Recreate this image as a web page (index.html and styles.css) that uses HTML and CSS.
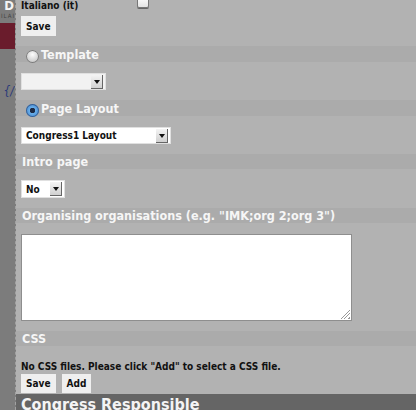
FILE: index.html
```html
<!DOCTYPE html>
<html>
<head>
<meta charset="utf-8">
<link rel="stylesheet" href="styles.css">
</head>
<body>
<div class="page">
  <aside class="side">
    <div class="side-logo">D</div>
    <div class="side-sub">ILAI</div>
    <div class="side-bar"></div>
    <div class="side-code">} {/</div>
  </aside>
  <main class="main">
    <div class="row lang-row">
      <span class="label">Italiano (it)</span>
      <span class="checkbox"></span>
    </div>
    <div class="row btn-row">
      <button class="btn">Save</button>
    </div>

    <div class="band"><span class="radio"></span><span class="band-title">Template</span></div>
    <div class="row field-row">
      <div class="select sel-template"><span class="sel-text"></span><span class="sel-arrow"></span></div>
    </div>

    <div class="band"><span class="radio radio-on"></span><span class="band-title">Page Layout</span></div>
    <div class="row field-row">
      <div class="select sel-layout"><span class="sel-text">Congress1 Layout</span><span class="sel-arrow"></span></div>
    </div>

    <div class="band band-plain"><span class="band-title">Intro page</span></div>
    <div class="row field-row">
      <div class="select sel-intro"><span class="sel-text">No</span><span class="sel-arrow"></span></div>
    </div>

    <div class="band band-plain"><span class="band-title">Organising organisations (e.g. "IMK;org 2;org 3")</span></div>
    <div class="row field-row">
      <div class="textarea"><span class="grip"></span></div>
    </div>

    <div class="band band-plain band-css"><span class="band-title">CSS</span></div>
    <div class="row note-row">
      <span class="label">No CSS files. Please click "Add" to select a CSS file.</span>
    </div>
    <div class="row btns-row">
      <button class="btn">Save</button>
      <button class="btn">Add</button>
    </div>
    <div class="dark-band"><span class="dark-title">Congress Responsible</span></div>
  </main>
</div>
</body>
</html>
```
FILE: styles.css
```css
html, body {
  margin: 0;
  padding: 0;
  height: 100%;
  overflow: hidden;
}
body {
  background: #b2b2b2;
  font-family: "DejaVu Sans Condensed", "DejaVu Sans", sans-serif;
}
.page {
  display: flex;
  height: 410px;
}
.side {
  width: 15px;
  flex: none;
  background: #7c7c7c;
  border-right: 1px dashed #a2a2a2;
  overflow: hidden;
  display: flex;
  flex-direction: column;
  align-items: flex-end;
}
.side-logo {
  color: #f4f4f4;
  font-weight: bold;
  font-size: 13px;
  line-height: 13px;
  margin-top: -1px;
  padding-right: 1px;
}
.side-sub {
  color: #444;
  font-size: 6px;
  line-height: 8px;
  letter-spacing: 1px;
  white-space: nowrap;
}
.side-bar {
  align-self: stretch;
  height: 26px;
  margin-top: 3px;
  background: #6a1c2c;
}
.side-code {
  margin-top: 34px;
  color: #2a3a7a;
  font-size: 12px;
  line-height: 16px;
  white-space: nowrap;
  font-style: italic;
  align-self: flex-end;
  padding-right: 1px;
}
.main {
  flex: 1;
  display: flex;
  flex-direction: column;
}
.row {
  display: flex;
  align-items: center;
  padding-left: 5px;
}
.label {
  font-weight: bold;
  font-size: 10px;
  color: #111;
}
.lang-row {
  height: 13px;
}
.checkbox {
  width: 10px;
  height: 10px;
  margin-left: 59px;
  margin-top: -7px;
  background: linear-gradient(#fff, #e4e4e4);
  border: 1px solid #777;
  border-radius: 2px;
  box-shadow: 0 1px 0 #666;
}
.btn-row {
  margin-top: 5px;
  height: 20px;
}
.btn {
  font-family: inherit;
  font-weight: bold;
  font-size: 10px;
  color: #111;
  background: #efefef;
  border: none;
  border-radius: 0;
  height: 20px;
  padding: 0 5px;
  margin: 0;
}
.band {
  margin-top: 10px;
  height: 16px;
  background: #ababab;
  display: flex;
  align-items: center;
  padding-left: 10px;
}
.band-plain {
  padding-left: 6px;
}
.band-css {
  height: 15px;
}
.band-title {
  color: #f6f6f6;
  font-weight: bold;
  font-size: 12.5px;
  white-space: nowrap;
}
.radio {
  width: 13px;
  height: 13px;
  flex: none;
  border-radius: 50%;
  margin-top: 4px;
  margin-right: 2px;
  background: radial-gradient(circle at 50% 35%, #fdfdfd, #d2d2d2 60%, #9a9a9a);
  box-shadow: inset 0 0 0 1px #7a7a7a;
}
.radio-on {
  background: radial-gradient(circle, #1d2a44 0 2.5px, #6aaee9 3px, #2f78c9 100%);
  box-shadow: inset 0 0 0 1px #3a5f91;
}
.field-row {
  margin-top: 11px;
}
.select {
  height: 17px;
  background: #fff;
  display: flex;
  align-items: center;
  justify-content: space-between;
  box-shadow: inset 0 0 0 1px #e0e0e0;
}
.sel-template {
  width: 85px;
  background: #f2f2f2;
}
.sel-layout {
  width: 150px;
}
.sel-intro {
  width: 44px;
  height: 18px;
}
.sel-text {
  font-weight: bold;
  font-size: 10px;
  color: #111;
  padding-left: 5px;
  white-space: nowrap;
}
.sel-arrow {
  width: 11px;
  height: 13px;
  margin-right: 3px;
  background: linear-gradient(#f4f4f4, #d0d0d0);
  border-right: 1px solid #666;
  border-bottom: 1px solid #666;
  position: relative;
}
.sel-arrow::after {
  content: "";
  position: absolute;
  left: 3px;
  top: 5px;
  border-left: 3px solid transparent;
  border-right: 3px solid transparent;
  border-top: 4px solid #111;
}
.textarea {
  width: 329px;
  height: 85px;
  background: #fff;
  border: 1px solid #8e8e8e;
  position: relative;
}
.grip {
  position: absolute;
  right: 1px;
  bottom: 1px;
  width: 9px;
  height: 9px;
  background: linear-gradient(135deg, transparent 45%, #999 45%, #999 52%, transparent 52%, transparent 65%, #999 65%, #999 72%, transparent 72%, transparent 85%, #999 85%);
}
.note-row {
  margin-top: 15px;
  height: 12px;
}
.btns-row {
  margin-top: 2px;
  gap: 6px;
  height: 19px;
}
.btns-row .btn {
  height: 19px;
}
.dark-band {
  margin-top: 1px;
  height: 20px;
  background: #656565;
  padding-left: 5px;
}
.dark-title {
  color: #f4f4f4;
  font-weight: bold;
  font-size: 16px;
  white-space: nowrap;
  line-height: 22px;
}
```
